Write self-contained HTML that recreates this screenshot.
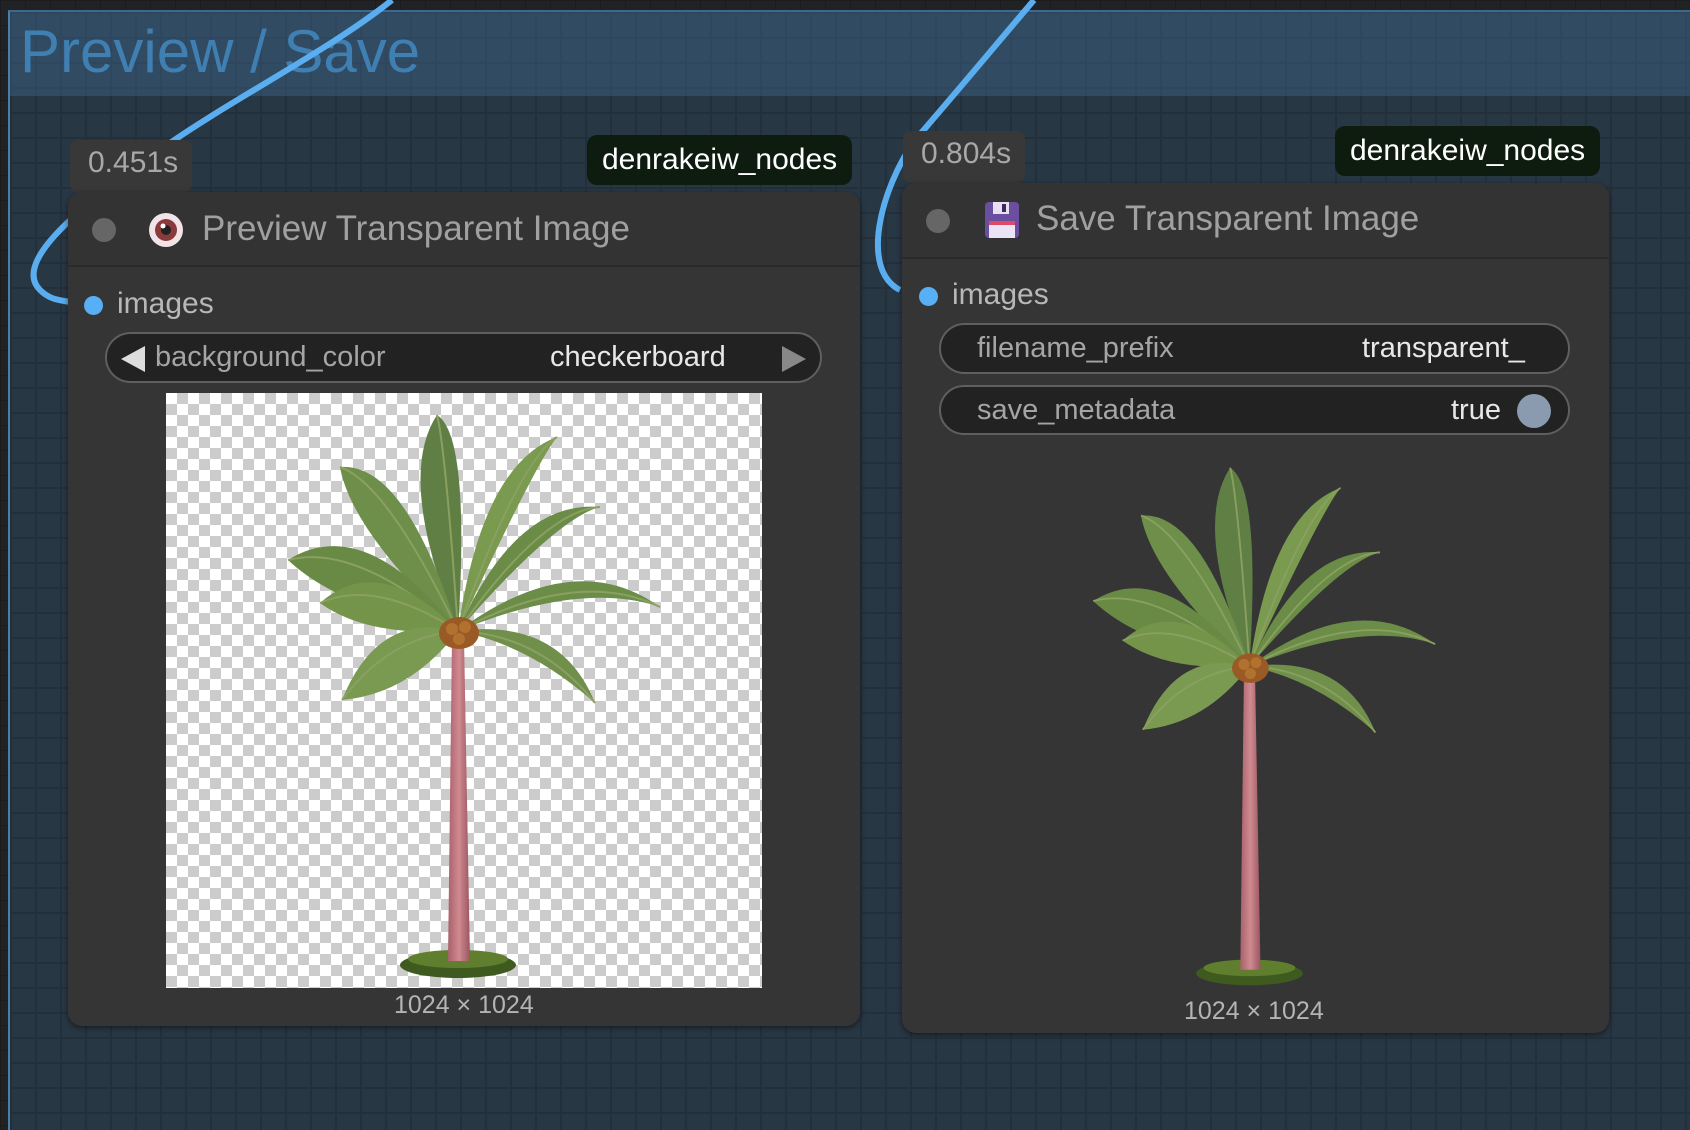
<!DOCTYPE html>
<html><head><meta charset="utf-8">
<style>
*{margin:0;padding:0;box-sizing:border-box}
body{width:1690px;height:1114px;overflow:hidden;position:relative;background:#202224;font-family:"Liberation Sans",sans-serif;
background-image:linear-gradient(#1a1c1e 1px,transparent 1px),linear-gradient(90deg,#1a1c1e 1px,transparent 1px);background-size:25px 25px}
.group{position:absolute;left:8px;top:10px;width:1700px;height:1120px;background:#283744;border-left:2px solid #4a7fa8;border-top:2px solid #3d6a8c;
background-image:linear-gradient(#23303c 2px,transparent 2px),linear-gradient(90deg,#23303c 2px,transparent 2px);background-size:25px 25px}
.gtitle{position:absolute;left:0;top:0;right:0;height:84px;background:rgba(60,100,135,.45)}
.gtitle span{position:absolute;left:10px;top:5px;font-size:60px;color:#3f7fb2}
.node{position:absolute;background:#353535;border-radius:14px;box-shadow:0 2px 6px rgba(0,0,0,.5)}
.ntitle{position:absolute;left:0;right:0;top:0;border-bottom:2px solid #2a2a2a;border-radius:14px 14px 0 0;background:#333}
.ntitle .dot{position:absolute;width:24px;height:24px;border-radius:50%;background:#666}
.ntitle .t{position:absolute;font-size:35px;color:#a0a0a0;white-space:nowrap}
.badge{position:absolute;background:#383838;color:#a8a8a8;font-size:30px;border-radius:8px;padding:6px 14px 6px 18px}
.pack{position:absolute;background:#0e1c10;color:#fff;font-size:30px;border-radius:10px;padding:8px 15px}
.inp{position:absolute;font-size:30px;color:#b8b8b8}
.inp:before{content:"";position:absolute;left:-33px;top:9px;width:19px;height:19px;border-radius:50%;background:#58aff5}
.w{position:absolute;background:#222;border:2px solid #5f5f5f;border-radius:26px;font-size:29px;color:#a5a5a5}
.w .l{position:absolute;top:7px}
.w .v{position:absolute;top:7px;color:#e8e8e8}
.cap{position:absolute;font-size:25px;color:#b4b4b4}
.chk{position:absolute;background-color:#fff;background-image:linear-gradient(45deg,#ccc 25%,transparent 25%,transparent 75%,#ccc 75%),linear-gradient(45deg,#ccc 25%,transparent 25%,transparent 75%,#ccc 75%);background-size:22px 22px;background-position:0 0,11px 11px}
svg.abs{position:absolute}
</style></head><body>
<div class="group"><div class="gtitle"><span>Preview / Save</span></div></div>

<svg class="abs" style="left:0;top:0" width="1690" height="1114">
<path d="M392 0 C330 50 230 100 160 150 C90 200 10 260 40 290 C50 300 60 300 70 302" fill="none" stroke="#5aaef0" stroke-width="6"/>
<path d="M1034 0 C1000 40 950 100 915 140 C880 190 860 270 900 290" fill="none" stroke="#5aaef0" stroke-width="6"/>
</svg>

<!-- Node 1 -->
<div class="badge" style="left:70px;top:140px;height:52px">0.451s</div>
<div class="pack" style="left:587px;top:135px">denrakeiw_nodes</div>
<div class="node" style="left:68px;top:192px;width:792px;height:834px">
 <div class="ntitle" style="height:75px">
  <div class="dot" style="left:24px;top:26px"></div>
  <svg class="abs" style="left:80px;top:20px" width="36" height="36" viewBox="0 0 36 36"><circle cx="18" cy="18" r="17" fill="#f1e4e8"/><circle cx="18" cy="18" r="11" fill="#8a3a3c"/><circle cx="18" cy="18" r="5" fill="#222"/><circle cx="15" cy="14" r="2.5" fill="#fff"/></svg>
  <div class="t" style="left:134px;top:17px">Preview Transparent Image</div>
 </div>
 <div class="inp" style="left:49px;top:95px">images</div>
 <div class="w" style="left:37px;top:140px;width:717px;height:51px">
  <svg class="abs" style="left:14px;top:12px" width="24" height="26"><path d="M0 13 L24 0 L24 26Z" fill="#ddd"/></svg>
  <div class="l" style="left:48px">background_color</div>
  <div class="v" style="left:443px">checkerboard</div>
  <svg class="abs" style="right:14px;top:12px" width="24" height="26"><path d="M24 13 L0 0 L0 26Z" fill="#888"/></svg>
 </div>
 <div class="chk" style="left:98px;top:201px;width:596px;height:595px">
  <svg width="596" height="595" viewBox="0 0 596 595"><use href="#palm"/></svg>
 </div>
 <div class="cap" style="left:326px;top:799px">1024 × 1024</div>
</div>

<!-- Node 2 -->
<div class="badge" style="left:903px;top:131px;height:52px">0.804s</div>
<div class="pack" style="left:1335px;top:126px">denrakeiw_nodes</div>
<div class="node" style="left:902px;top:183px;width:707px;height:850px">
 <div class="ntitle" style="height:76px">
  <div class="dot" style="left:24px;top:26px"></div>
  <svg class="abs" style="left:82px;top:18px" width="36" height="38" viewBox="0 0 36 38"><rect x="1" y="1" width="34" height="36" rx="4" fill="#6a4fa0"/><rect x="9" y="1" width="16" height="12" fill="#e8e0f0"/><rect x="18" y="3" width="4" height="8" fill="#3a2a60"/><rect x="5" y="20" width="26" height="17" fill="#ece4f4"/><rect x="5" y="20" width="26" height="4" fill="#e04868"/></svg>
  <div class="t" style="left:134px;top:16px">Save Transparent Image</div>
 </div>
 <div class="inp" style="left:50px;top:95px">images</div>
 <div class="w" style="left:37px;top:140px;width:631px;height:51px">
  <div class="l" style="left:36px">filename_prefix</div>
  <div class="v" style="left:421px">transparent_</div>
 </div>
 <div class="w" style="left:37px;top:202px;width:631px;height:50px">
  <div class="l" style="left:36px">save_metadata</div>
  <div class="v" style="left:510px">true</div>
  <div style="position:absolute;left:576px;top:7px;width:34px;height:34px;border-radius:50%;background:#8a9bb0"></div>
 </div>
 <svg class="abs" style="left:79px;top:264px" width="548" height="548" viewBox="0 0 596 595"><use href="#palm"/></svg>
 <div class="cap" style="left:282px;top:814px">1024 × 1024</div>
</div>

<svg width="0" height="0" style="position:absolute"><defs>
<linearGradient id="tr" x1="0" x2="1"><stop offset="0" stop-color="#a8606a"/><stop offset=".5" stop-color="#d08a90"/><stop offset="1" stop-color="#9a5560"/></linearGradient>
<g id="palm">
 <ellipse cx="292" cy="572" rx="58" ry="13" fill="#3f5a1e"/>
 <ellipse cx="292" cy="566" rx="50" ry="9" fill="#5f7f2e"/>
 <path d="M286 245 L298 245 L304 568 L282 568 Z" fill="url(#tr)"/>
 <g id="fronds"></g>
 <ellipse cx="293" cy="240" rx="20" ry="16" fill="#9a5a26"/>
 <circle cx="286" cy="236" r="6" fill="#b0722e"/><circle cx="299" cy="234" r="6" fill="#b0722e"/><circle cx="293" cy="246" r="6" fill="#b0722e"/>
</g>
</defs></svg>
<script>
var C=[292,238],tips=[[271,22,50],[174,74,44],[391,44,40],[434,114,42],[122,167,46],[154,210,40],[494,214,44],[176,307,42],[429,310,44]];
var cols=["#5f7f44","#6e8f4a","#7a9a50","#6a8c46","#688a44","#739449","#6c8d48","#7a9a52","#6f8f4b"];
var g=document.getElementById('fronds'),h='';
tips.forEach(function(t,i){var dx=t[0]-C[0],dy=t[1]-C[1],L=Math.hypot(dx,dy),nx=-dy/L,ny=dx/L,w=t[2];
var mx=C[0]+dx*.6,my=C[1]+dy*.6-L*.2;
var a=[mx+nx*w*.5,my+ny*w*.5-w*.4],b=[mx-nx*w,my-ny*w+w*.3];
h+='<path fill="'+cols[i]+'" d="M'+C[0]+' '+C[1]+' Q'+a[0]+' '+a[1]+' '+t[0]+' '+t[1]+' Q'+b[0]+' '+b[1]+' '+C[0]+' '+C[1]+'Z"/>';
h+='<path fill="none" stroke="#8aa060" stroke-width="2" d="M'+C[0]+' '+C[1]+' Q'+mx+' '+(my-w*.2)+' '+t[0]+' '+t[1]+'"/>';});
g.innerHTML=h;
</script>
</body></html>
